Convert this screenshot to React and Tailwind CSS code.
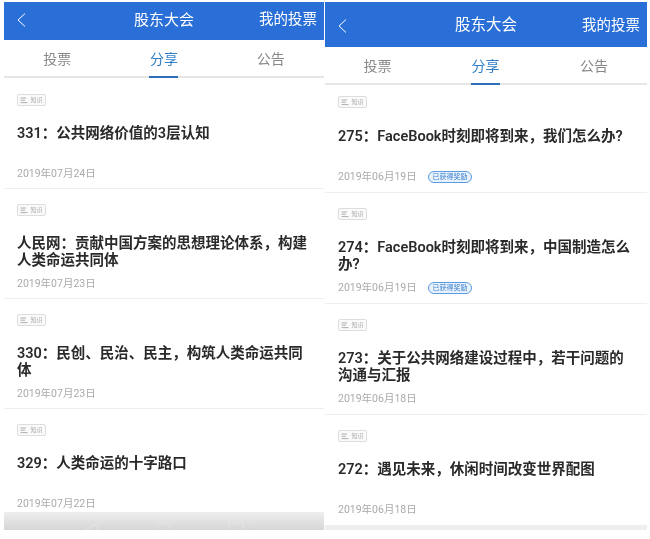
import React from "react";

const leftItems = [
  { title: "331：公共网络价值的3层认知", date: "2019年07月24日" },
  { title: "人民网：贡献中国方案的思想理论体系，构建人类命运共同体", date: "2019年07月23日" },
  { title: "330：民创、民治、民主，构筑人类命运共同体", date: "2019年07月23日" },
  { title: "329：人类命运的十字路口", date: "2019年07月22日" },
];

const rightItems = [
  { title: "275：FaceBook时刻即将到来，我们怎么办?", date: "2019年06月19日", reward: true },
  { title: "274：FaceBook时刻即将到来，中国制造怎么办?", date: "2019年06月19日", reward: true },
  { title: "273：关于公共网络建设过程中，若干问题的沟通与汇报", date: "2019年06月18日" },
  { title: "272：遇见未来，休闲时间改变世界配图", date: "2019年06月18日" },
];

function Tag() {
  return (
    <div className="flex h-[12px] w-[29px] items-center justify-center gap-[2px] rounded-[2px] border border-[#dddddd] bg-[#fafafa]">
      <svg width="8" height="7" viewBox="0 0 8 7" fill="none" stroke="#999999" strokeWidth="0.8">
        <path d="M0.5 1H6M0.5 3.2H5M0.5 5.6H7.5" />
      </svg>
      <span className="text-[6px] leading-none text-[#aaaaaa]">知识</span>
    </div>
  );
}

function Item({ item, top, gap }) {
  return (
    <div className={`h-[111px] border-b border-[#eeeeee] pl-[13px] pr-[12px] ${top}`}>
      <Tag />
      <div className={`h-[35px] text-[14.5px] leading-[17px] font-semibold text-[#2a2a2a] ${gap}`}>
        {item.title}
      </div>
      <div className="mt-[7px] flex h-[14px] items-center text-[10.5px] text-[#aaaaaa]">
        <span className="w-[90px]">{item.date}</span>
        {item.reward && (
          <span className="flex h-[12px] w-[44px] items-center justify-center rounded-full border border-[#5b9be0] bg-[#e8f2fc] text-[7px] leading-none text-[#3a7fd0]">
            已获得奖励
          </span>
        )}
      </div>
    </div>
  );
}

function Header({ height, titleSize, mb }) {
  return (
    <div className={`grid grid-cols-[1fr_auto_1fr] items-center bg-[#2a6fd8] text-white ${height}`}>
      <svg className={`ml-[13px] ${mb}`} width="9" height="14" viewBox="0 0 9 14" fill="none" stroke="#ffffff" strokeWidth="1">
        <path d="M8 0.5L1 7L8 13.5" />
      </svg>
      <div className={`${titleSize} ${mb}`}>股东大会</div>
      <div className={`justify-self-end pr-[7px] text-[14.5px] ${mb}`}>我的投票</div>
    </div>
  );
}

function Tabs({ cols, pad }) {
  return (
    <div className={`grid h-[38px] border-b-2 border-[#e6e6e6] bg-white text-[14px] ${cols}`}>
      <div className={`flex items-center justify-center text-[#888888] ${pad}`}>投票</div>
      <div className="flex items-center justify-center">
        <span className={`-mb-[2px] flex h-[38px] w-[29px] items-center justify-center border-b-2 border-[#2a6fb8] text-[#2f7fc8] ${pad}`}>
          分享
        </span>
      </div>
      <div className={`flex items-center justify-center text-[#888888] ${pad}`}>公告</div>
    </div>
  );
}

export default function App() {
  return (
    <div
      className="flex h-[539px] w-[650px] items-start overflow-hidden bg-white pt-[2px] pl-[4px] blur-[0.3px]"
      style={{ fontFamily: 'Roboto, "Noto Sans CJK SC", sans-serif' }}
    >
      {/* left phone */}
      <div className="relative h-[528px] w-[320px] overflow-hidden">
        <Header height="h-[38px]" titleSize="text-[15px]" mb="mb-[2px]" />
        <Tabs cols="grid-cols-3" pad="pt-[2px]" />
        <div>
          {leftItems.map((item) => (
            <div key={item.title} className="-mb-[1px]">
              <Item item={item} top="pt-[16px]" gap="mt-[19px]" />
            </div>
          ))}
        </div>
        <div className="absolute right-0 bottom-0 left-0 flex h-[18px] items-start justify-center gap-[56px] bg-gradient-to-b from-[#eeeeee] to-[#d6d6d6] pt-[10px]">
          <svg width="16" height="16" viewBox="0 0 16 16" fill="none" stroke="#e4e4e4">
            <path d="M14 1L2 8L14 15Z" />
          </svg>
          <svg width="16" height="16" viewBox="0 0 16 16" fill="none" stroke="#e4e4e4">
            <circle cx="8" cy="8" r="7" />
          </svg>
          <svg width="16" height="16" viewBox="0 0 16 16" fill="none" stroke="#e4e4e4">
            <rect x="1" y="1" width="14" height="14" />
          </svg>
        </div>
      </div>

      {/* right phone */}
      <div className="relative ml-[1px] h-[528px] w-[322px] overflow-hidden">
        <Header height="h-[45px]" titleSize="text-[15.5px]" mb="mt-[3px]" />
        <Tabs cols="grid-cols-[105px_111px_106px]" pad="pt-[3px]" />
        <div>
          {rightItems.map((item, i) => (
            <Item
              key={item.title}
              item={item}
              top={i === 0 ? "!h-[108px] pt-[11px]" : "pt-[15px]"}
              gap={i === 0 ? "mt-[20px]" : "mt-[19px]"}
            />
          ))}
        </div>
        <div className="absolute right-0 bottom-0 left-0 h-[4px] bg-[#eeeeee]" />
      </div>
    </div>
  );
}
